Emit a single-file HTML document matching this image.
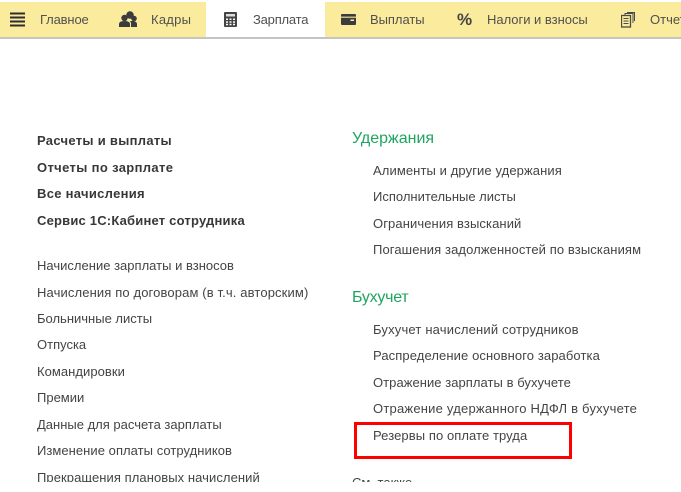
<!DOCTYPE html>
<html lang="ru">
<head>
<meta charset="utf-8">
<style>
html,body{margin:0;padding:0;background:#fff}
#p{position:relative;width:681px;height:492px;overflow:hidden;background:#fff;font-family:"Liberation Sans",sans-serif;font-size:13px;color:#444}
#p div,#p svg{position:absolute}
#w{left:0;top:0;width:681px;height:492px;filter:blur(.3px)}
.t{white-space:nowrap;line-height:16px}
.b{font-weight:bold;color:#383838}
.g{font-size:16px;line-height:20px;color:#1fa45f}
.m{color:#505050;line-height:16px;white-space:nowrap}
</style>
</head>
<body>
<div id="p"><div id="w">
<div style="left:0;top:2px;width:681px;height:35px;background:#fbec9d"></div>
<div style="left:206px;top:2px;width:119px;height:35px;background:#fff"></div>
<div style="left:0;top:37px;width:681px;height:2px;background:#c4c4c4"></div>

<svg style="left:10px;top:12px" width="15" height="15"><path d="M0 1.500h15M0 5.500h15M0 9.500h15M0 13.500h15" stroke="#2e2e2e" stroke-width="2"/></svg>
<div class="m" style="left:40px;top:12px;letter-spacing:-.15px">Главное</div>
<svg style="left:119px;top:11px" width="18" height="16"><circle cx="11" cy="4" r="3.800" fill="#3c3c3c"/><circle cx="5.500" cy="7" r="3.200" fill="#3c3c3c"/><circle cx="15" cy="7.500" r="2.800" fill="#3c3c3c"/><path d="M0 16v-3q0-3 5.500-3t5.500 3v3zM12 16v-4l-1-2h4q3 1 3 3v3z" fill="#3c3c3c"/></svg>
<div class="m" style="left:151px;top:12px;letter-spacing:.25px">Кадры</div>
<svg style="left:224px;top:12px" width="13" height="15"><rect width="13" height="15" rx="1" fill="#444"/><rect x="2" y="2" width="9" height="2.500" fill="#ddd"/><path d="M2 6.500h2v1.500h-2zM5.500 6.500h2v1.500h-2zM9 6.500h2v1.500h-2zM2 9.200h2v1.500h-2zM5.500 9.200h2v1.500h-2zM9 9.200h2v1.500h-2zM2 11.800h2v1.500h-2zM5.500 11.800h2v1.500h-2zM9 11.800h2v1.500h-2z" fill="#fff"/></svg>
<div class="m" style="left:253px;top:12px;letter-spacing:-.2px">Зарплата</div>
<svg style="left:341px;top:14px" width="15" height="11"><rect width="15" height="11" rx="1" fill="#3c3c3c"/><rect y="2.500" width="15" height="1.500" fill="#c9bd80"/><rect x="9.500" y="5.500" width="3.500" height="1.500" fill="#fbec9d"/></svg>
<div class="m" style="left:370px;top:12px;letter-spacing:-.05px">Выплаты</div>
<div style="left:457px;top:10px;font-size:17px;line-height:20px;font-weight:bold;color:#444">%</div>
<div class="m" style="left:487px;top:12px;letter-spacing:-.02px">Налоги и взносы</div>
<svg style="left:621px;top:12px" width="14" height="16" fill="none" stroke="#4a4a4a" stroke-width="1"><path d="M4 3V1.500h8V11M6.500 1V.5h7V9"/><rect x=".5" y="3.500" width="9" height="11.500" stroke-width="1.300"/><path d="M2.500 6.500h5M2.500 9h5M2.500 11.500h5"/></svg>
<div class="m" style="left:650px;top:12px">Отчеты</div>

<div class="t b" style="left:37px;top:133px;letter-spacing:.3px">Расчеты и выплаты</div>
<div class="t b" style="left:37px;top:160px;letter-spacing:.35px">Отчеты по зарплате</div>
<div class="t b" style="left:37px;top:186px;letter-spacing:.3px">Все начисления</div>
<div class="t b" style="left:37px;top:213px;letter-spacing:.2px">Сервис 1С:Кабинет сотрудника</div>

<div class="t" style="left:37px;top:258px;letter-spacing:.01px">Начисление зарплаты и взносов</div>
<div class="t" style="left:37px;top:285px;letter-spacing:.13px">Начисления по договорам (в т.ч. авторским)</div>
<div class="t" style="left:37px;top:311px;letter-spacing:0">Больничные листы</div>
<div class="t" style="left:37px;top:337px;letter-spacing:0">Отпуска</div>
<div class="t" style="left:37px;top:364px;letter-spacing:.05px">Командировки</div>
<div class="t" style="left:37px;top:390px;letter-spacing:0">Премии</div>
<div class="t" style="left:37px;top:417px;letter-spacing:0">Данные для расчета зарплаты</div>
<div class="t" style="left:37px;top:443px;letter-spacing:.05px">Изменение оплаты сотрудников</div>
<div class="t" style="left:37px;top:470px;letter-spacing:.07px">Прекращения плановых начислений</div>

<div class="g t" style="left:352px;top:129px">Удержания</div>
<div class="t" style="left:373px;top:163px;letter-spacing:.1px">Алименты и другие удержания</div>
<div class="t" style="left:373px;top:189px;letter-spacing:0">Исполнительные листы</div>
<div class="t" style="left:373px;top:216px;letter-spacing:.1px">Ограничения взысканий</div>
<div class="t" style="left:373px;top:242px;letter-spacing:.1px">Погашения задолженностей по взысканиям</div>

<div class="g t" style="left:352px;top:288px;letter-spacing:-.25px">Бухучет</div>
<div class="t" style="left:373px;top:322px;letter-spacing:.18px">Бухучет начислений сотрудников</div>
<div class="t" style="left:373px;top:348px;letter-spacing:.1px">Распределение основного заработка</div>
<div class="t" style="left:373px;top:375px;letter-spacing:.05px">Отражение зарплаты в бухучете</div>
<div class="t" style="left:373px;top:401px;letter-spacing:.22px">Отражение удержанного НДФЛ в бухучете</div>
<div class="t" style="left:373px;top:428px;letter-spacing:.08px">Резервы по оплате труда</div>
<div style="left:354px;top:422px;width:212px;height:31px;border:3px solid #f00"></div>
<div class="t" style="left:352px;top:475px;letter-spacing:0">См. также</div>
<div style="left:0;top:482px;width:681px;height:10px;background:#fff"></div>
</div></div>
</body>
</html>
